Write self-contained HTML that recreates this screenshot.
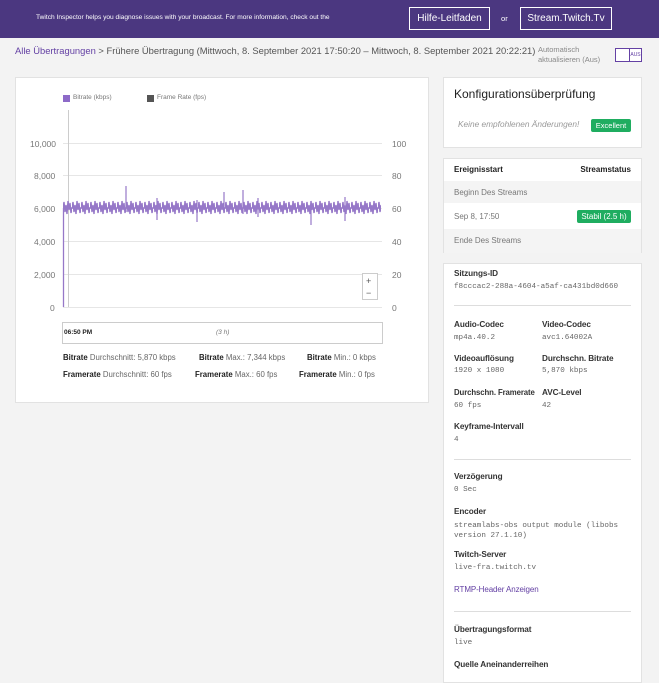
<!DOCTYPE html>
<html><head><meta charset="utf-8"><style>
*{box-sizing:border-box;margin:0;padding:0}
body{width:659px;height:677px;overflow:hidden;background:#f3f3f3;font-family:"Liberation Sans",sans-serif;color:#222;position:relative}
.banner{position:absolute;left:0;top:0;width:659px;height:38px;background:#4b3780;color:#fff;font-size:7.6px}
.banner .t{position:absolute;left:36px;top:14px;white-space:nowrap;font-size:6.6px}
.btn{position:absolute;top:7px;height:23px;border:1px solid #fff;font-size:10px;line-height:21px;text-align:center;color:#fff;white-space:nowrap}
.crumb{position:absolute;left:15px;top:45px;font-size:9.4px;color:#555;white-space:nowrap}
.crumb a{color:#6441a4}
.card{position:absolute;background:#fff;border:1px solid #e2e2e2}
.ax{position:absolute;font-size:8.5px;color:#777}
.st{position:absolute;font-size:7.8px;color:#666;white-space:nowrap}
.st b{color:#222;font-weight:bold}
.lbl{position:absolute;left:10px;font-size:8.2px;color:#333;font-weight:bold;white-space:nowrap;letter-spacing:-0.1px}
.val{position:absolute;left:10px;font-family:"Liberation Mono",monospace;font-size:7.6px;color:#666;white-space:nowrap}
.hr{position:absolute;left:10px;right:10px;height:1px;background:#ddd}
.badge{position:absolute;background:#1fad60;color:#fff;font-size:8.5px;border-radius:2px;text-align:center;white-space:nowrap}
</style></head><body>
<div class="banner"><span class="t">Twitch Inspector helps you diagnose issues with your broadcast. For more information, check out the</span>
<div class="btn" style="left:409px;width:81px">Hilfe-Leitfaden</div>
<span style="position:absolute;left:501px;top:14px">or</span>
<div class="btn" style="left:520px;width:92px">Stream.Twitch.Tv</div></div>
<div class="crumb"><a>Alle Übertragungen</a> &gt; Frühere Übertragung (Mittwoch, 8. September 2021 17:50:20 – Mittwoch, 8. September 2021 20:22:21)</div>
<div style="position:absolute;left:538px;top:45px;font-size:7.5px;color:#888;line-height:10px">Automatisch<br>aktualisieren (Aus)</div>
<div style="position:absolute;left:615px;top:48px;width:27px;height:14px;border:1px solid #6441a4;background:#fff"><div style="position:absolute;right:0;top:0;width:12px;height:12px;border-left:1px solid #6441a4;font-size:5px;color:#6441a4;line-height:12px;text-align:center">AUS</div></div>

<div class="card" style="left:15px;top:77px;width:414px;height:326px">
<div style="position:absolute;left:47px;top:17px;width:7px;height:7px;background:#8d6ac8"></div>
<div class="ax" style="left:57px;top:16px;font-size:6.5px">Bitrate (kbps)</div>
<div style="position:absolute;left:131px;top:17px;width:7px;height:7px;background:#555"></div>
<div class="ax" style="left:141px;top:16px;font-size:6.5px">Frame Rate (fps)</div>
</div>
<svg style="position:absolute;left:0;top:0" width="440" height="410">
<defs><pattern id="z" x="0" y="193" width="9" height="30" patternUnits="userSpaceOnUse">
<polyline points="0,15 1,9 2,19 3,12 4,21 5,8 6,17 7,10 8,20 9,15" fill="none" stroke="#9678c8" stroke-width="1.4"/></pattern></defs>
<g stroke="#e6e6e6" stroke-width="1">
<line x1="63" y1="143.5" x2="382" y2="143.5"/><line x1="63" y1="175.5" x2="382" y2="175.5"/><line x1="63" y1="208.5" x2="382" y2="208.5"/><line x1="63" y1="241.5" x2="382" y2="241.5"/><line x1="63" y1="274.5" x2="382" y2="274.5"/><line x1="63" y1="307.5" x2="382" y2="307.5"/></g>
<line x1="68.5" y1="110" x2="68.5" y2="307" stroke="#ccc"/>
<line x1="63.5" y1="208" x2="63.5" y2="307" stroke="#9678c8" stroke-width="1.3"/>
<rect x="63" y="193" width="318" height="30" fill="url(#z)"/>
<line x1="63" y1="208" x2="381" y2="208" stroke="#9678c8" stroke-width="1.5"/>
<g stroke="#9678c8" stroke-width="1.2">
<line x1="126" y1="186" x2="126" y2="212"/><line x1="224" y1="192" x2="224" y2="210"/><line x1="243" y1="190" x2="243" y2="214"/><line x1="311" y1="205" x2="311" y2="225"/><line x1="157" y1="198" x2="157" y2="220"/><line x1="197" y1="200" x2="197" y2="222"/><line x1="345" y1="197" x2="345" y2="221"/><line x1="258" y1="198" x2="258" y2="217"/></g>
<rect x="362.5" y="273.5" width="15" height="26" fill="#fff" stroke="#ccc"/>
<text x="366" y="284" font-size="9" fill="#555" font-family="Liberation Sans">+</text>
<text x="366" y="296" font-size="9" fill="#555" font-family="Liberation Sans">−</text>
<rect x="62.5" y="322.5" width="320" height="21" fill="#fff" stroke="#ccc"/>
</svg>
<div class="ax" style="left:30px;top:139px">10,000</div>
<div class="ax" style="left:34px;top:171px">8,000</div>
<div class="ax" style="left:34px;top:204px">6,000</div>
<div class="ax" style="left:34px;top:237px">4,000</div>
<div class="ax" style="left:34px;top:270px">2,000</div>
<div class="ax" style="left:50px;top:303px">0</div>
<div class="ax" style="left:392px;top:139px">100</div>
<div class="ax" style="left:392px;top:171px">80</div>
<div class="ax" style="left:392px;top:204px">60</div>
<div class="ax" style="left:392px;top:237px">40</div>
<div class="ax" style="left:392px;top:270px">20</div>
<div class="ax" style="left:392px;top:303px">0</div>
<div class="ax" style="left:64px;top:329px;font-size:6.5px;color:#222;font-weight:bold">06:50 PM</div>
<div class="ax" style="left:216px;top:329px;font-size:6.5px;font-style:italic">(3 h)</div>
<div class="st" style="left:63px;top:353px"><b>Bitrate</b> Durchschnitt: 5,870 kbps</div>
<div class="st" style="left:199px;top:353px"><b>Bitrate</b> Max.: 7,344 kbps</div>
<div class="st" style="left:307px;top:353px"><b>Bitrate</b> Min.: 0 kbps</div>
<div class="st" style="left:63px;top:370px"><b>Framerate</b> Durchschnitt: 60 fps</div>
<div class="st" style="left:195px;top:370px"><b>Framerate</b> Max.: 60 fps</div>
<div class="st" style="left:299px;top:370px"><b>Framerate</b> Min.: 0 fps</div>

<div class="card" style="left:443px;top:77px;width:199px;height:71px">
<div style="position:absolute;left:10px;top:9px;font-size:12px;color:#222">Konfigurationsüberprüfung</div>
<div style="position:absolute;left:14px;top:41px;font-size:8.3px;color:#999;font-style:italic;white-space:nowrap">Keine empfohlenen Änderungen!</div>
<div class="badge" style="left:147px;top:41px;width:40px;height:13px;line-height:13px;font-size:7.5px">Excellent</div>
</div>
<div class="card" style="left:443px;top:158px;width:199px;height:95px">
<div style="position:absolute;left:10px;top:6px;font-size:8px;font-weight:bold">Ereignisstart</div>
<div style="position:absolute;right:10px;top:6px;font-size:8px;font-weight:bold">Streamstatus</div>
<div style="position:absolute;left:0;top:22px;width:197px;height:22px;background:#f4f4f4"></div>
<div style="position:absolute;left:10px;top:29px;font-size:8px;color:#777">Beginn Des Streams</div>
<div style="position:absolute;left:10px;top:53px;font-size:8px;color:#777">Sep 8, 17:50</div>
<div class="badge" style="left:133px;top:51px;width:54px;height:13px;line-height:13px;font-size:8px">Stabil (2.5 h)</div>
<div style="position:absolute;left:0;top:70px;width:197px;height:24px;background:#f4f4f4"></div>
<div style="position:absolute;left:10px;top:77px;font-size:8px;color:#777">Ende Des Streams</div>
</div>
<div class="card" style="left:443px;top:263px;width:199px;height:420px">
<div class="lbl" style="top:5px">Sitzungs-ID</div><div class="val" style="top:19px">f8cccac2-288a-4604-a5af-ca431bd0d660</div>
<div class="hr" style="top:41px"></div>
<div class="lbl" style="top:56px">Audio-Codec</div><div class="val" style="top:70px">mp4a.40.2</div>
<div class="lbl" style="top:56px;left:98px">Video-Codec</div><div class="val" style="top:70px;left:98px">avc1.64002A</div>
<div class="lbl" style="top:90px">Videoauflösung</div><div class="val" style="top:103px">1920 x 1080</div>
<div class="lbl" style="top:90px;left:98px">Durchschn. Bitrate</div><div class="val" style="top:103px;left:98px">5,870 kbps</div>
<div class="lbl" style="top:124px;font-size:7.8px">Durchschn. Framerate</div><div class="val" style="top:138px">60 fps</div>
<div class="lbl" style="top:124px;left:98px">AVC-Level</div><div class="val" style="top:138px;left:98px">42</div>
<div class="lbl" style="top:158px">Keyframe-Intervall</div><div class="val" style="top:172px">4</div>
<div class="hr" style="top:195px"></div>
<div class="lbl" style="top:208px">Verzögerung</div><div class="val" style="top:222px">0 Sec</div>
<div class="lbl" style="top:243px">Encoder</div><div class="val" style="top:257px;line-height:10px">streamlabs-obs output module (libobs<br>version 27.1.10)</div>
<div class="lbl" style="top:286px">Twitch-Server</div><div class="val" style="top:300px">live-fra.twitch.tv</div>
<div class="lbl" style="top:321px;font-weight:normal;color:#6441a4;font-size:8px">RTMP-Header Anzeigen</div>
<div class="hr" style="top:347px"></div>
<div class="lbl" style="top:361px">Übertragungsformat</div><div class="val" style="top:375px">live</div>
<div class="lbl" style="top:396px">Quelle Aneinanderreihen</div>
</div>
</body></html>
